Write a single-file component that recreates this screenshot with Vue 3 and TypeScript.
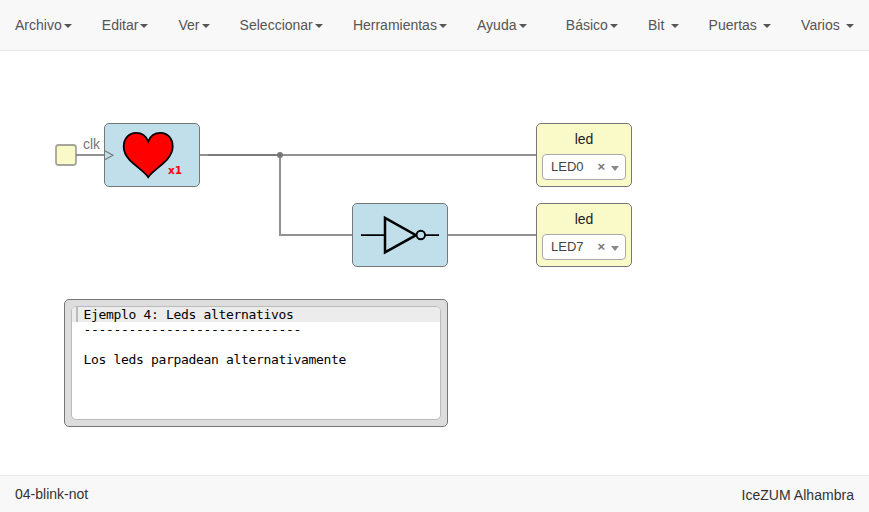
<script setup lang="ts">
interface Menu {
  label: string
  spaced: boolean
}

interface LedBlock {
  name: string
  pin: string
  place: string
}

const mainMenus: Menu[] = ['Archivo', 'Editar', 'Ver', 'Seleccionar', 'Herramientas', 'Ayuda'].map(
  (label) => ({ label, spaced: false }),
)

const blockMenus: Menu[] = [
  { label: 'Básico', spaced: false },
  { label: 'Bit', spaced: true },
  { label: 'Puertas', spaced: true },
  { label: 'Varios', spaced: true },
]

const leds: LedBlock[] = [
  { name: 'led', pin: 'LED0', place: 'led-top' },
  { name: 'led', pin: 'LED7', place: 'led-bottom' },
]

const noteLines: string[] = [
  'Ejemplo 4: Leds alternativos',
  '-----------------------------',
  '',
  'Los leds parpadean alternativamente',
]
</script>

<template>
  <div class="app">
    <header class="navbar">
      <nav class="menus">
        <a v-for="m in mainMenus" :key="m.label" class="menu">{{ m.label }}<span class="caret"></span></a>
      </nav>
      <nav class="menus">
        <a v-for="m in blockMenus" :key="m.label" class="menu" :class="{ spaced: m.spaced }">{{ m.label }}<span class="caret"></span></a>
      </nav>
    </header>

    <main class="canvas">
      <svg class="wires" width="869" height="424" viewBox="0 51 869 424">
        <g fill="none" stroke="#777" stroke-opacity="0.8" stroke-width="2">
          <path d="M76 155H105" />
          <path d="M200 155H536" />
          <path d="M208 155H280V235H352" />
          <path d="M448 235H536" />
        </g>
        <circle cx="280" cy="155" r="3" fill="#777" />
        <rect x="56" y="145" width="20" height="20" rx="2.500" fill="#fafac8" stroke="#777" stroke-opacity="0.65" stroke-width="1.800" />
      </svg>

      <span class="clock-label">clk</span>

      <div class="block heart">
        <svg width="94" height="62" viewBox="105 124 94 62">
          <path d="M104.500 150.500L113 155.300L104.500 160" fill="none" stroke="#777" stroke-width="1.100" />
          <path
            d="M148.200 177.200C144 171.200 137 167.500 129.500 159.800C125 155 123.700 151.500 123.700 146.500C123.700 138.500 129.200 132.800 136 132.800C142 132.800 146.300 136.500 148.200 141.300C150.100 136.500 154.500 132.800 160.500 132.800C167.500 132.800 172.700 138.500 172.700 146.500C172.700 151.500 171 155 166.800 159.800C159.500 167.500 152.400 171.200 148.200 177.200Z"
            fill="#f00"
            stroke="#000"
            stroke-width="1.800"
          />
        </svg>
        <span class="rate">x1</span>
      </div>

      <div class="block inverter">
        <svg width="94" height="62" viewBox="353 204 94 62">
          <path d="M361 235.200H385M425 235.200H439" stroke="#000" stroke-width="1.800" />
          <path d="M385 217.800V252.400L416 235.200Z" fill="none" stroke="#000" stroke-width="2.500" />
          <circle cx="420.800" cy="235" r="4.200" fill="#c0dfeb" stroke="#000" stroke-width="1.900" />
        </svg>
      </div>

      <section v-for="led in leds" :key="led.pin" class="block led" :class="led.place">
        <span class="led-name">{{ led.name }}</span>
        <div class="select">
          <span class="pin">{{ led.pin }}</span>
          <span class="clear">×</span>
          <span class="arrow"></span>
        </div>
      </section>

      <section class="note">
        <div class="editor">
          <div v-for="(line, i) in noteLines" :key="i" class="line" :class="{ active: i === 0 }">{{ line }}</div>
        </div>
      </section>
    </main>

    <footer class="statusbar">
      <span>04-blink-not</span>
      <span class="board">IceZUM Alhambra</span>
    </footer>
  </div>
</template>

<style>
body {
  margin: 0;
  background: #fff;
}
</style>

<style scoped>
.app {
  display: flex;
  flex-direction: column;
  height: 512px;
  overflow: hidden;
  font: 14px/20px "Liberation Sans", Arial, sans-serif;
  color: #333;
}

.app * {
  box-sizing: border-box;
}

.navbar {
  display: flex;
  justify-content: space-between;
  height: 51px;
  flex: none;
  background: #f8f8f8;
  border-bottom: 1px solid #e7e7e7;
}

.menus {
  display: flex;
}

.menu {
  padding: 15px;
  color: #555;
  white-space: nowrap;
}

.caret {
  display: inline-block;
  margin-left: 2.12px;
  vertical-align: middle;
  border-top: 4px solid #555;
  border-right: 4px solid transparent;
  border-left: 4px solid transparent;
}

.spaced .caret {
  margin-left: 6.25px;
}

.canvas {
  position: relative;
  flex: 1;
}

.wires {
  position: absolute;
  left: 0;
  top: 0;
}

.clock-label {
  position: absolute;
  left: 83px;
  top: 83px;
  color: #777;
}

.block {
  position: absolute;
  width: 96px;
  height: 64px;
  border: 1px solid #777;
  border-radius: 5px;
  background: #c0dfeb;
}

.block svg {
  display: block;
}

.heart {
  left: 104px;
  top: 72px;
}

.rate {
  position: absolute;
  left: 63px;
  top: 40px;
  font: bold 10.5px/12px "DejaVu Sans", sans-serif;
  color: #ff0010;
}

.inverter {
  left: 352px;
  top: 152px;
}

.led {
  left: 536px;
  display: flex;
  flex-direction: column;
  align-items: center;
  padding: 5px 5px 0;
  background: #fafac8;
}

.led-top {
  top: 72px;
}

.led-bottom {
  top: 152px;
}

.led-name {
  color: #222;
}

.select {
  display: flex;
  align-items: center;
  width: 84px;
  height: 26px;
  margin-top: 5px;
  padding: 0 6px 0 8px;
  background: #fff;
  border: 1px solid #aaa;
  border-radius: 4px;
  font-size: 13px;
  line-height: 24px;
  color: #444;
}

.pin {
  flex: 1;
}

.clear {
  margin-right: 6px;
  font-weight: bold;
  color: #777;
}

.arrow {
  margin-top: 3px;
  border-top: 5px solid #888;
  border-right: 4px solid transparent;
  border-left: 4px solid transparent;
}

.note {
  position: absolute;
  left: 64px;
  top: 248px;
  width: 384px;
  height: 128px;
  padding: 6px;
  background: #ddd;
  border: 1px solid #777;
  border-radius: 5px;
}

.editor {
  height: 114px;
  overflow: hidden;
  background: #fff;
  border: 1px solid #bbb;
  border-radius: 5px;
}

.line {
  height: 15px;
  padding-left: 11.5px;
  font: 13px/15px "DejaVu Sans Mono", monospace;
  letter-spacing: -0.327px;
  color: #000;
  white-space: pre;
}

.line.active {
  margin-left: 4px;
  padding-left: 5.5px;
  background: #ececec;
  border-left: 2px solid #bbb;
  box-shadow: -4px 0 #ececec;
}

.statusbar {
  display: flex;
  justify-content: space-between;
  flex: none;
  height: 37px;
  padding: 8px 15px 0;
  background: #f8f8f8;
  border-top: 1px solid #e7e7e7;
}

.board {
  padding-top: 1px;
  letter-spacing: 0.03px;
}
</style>
